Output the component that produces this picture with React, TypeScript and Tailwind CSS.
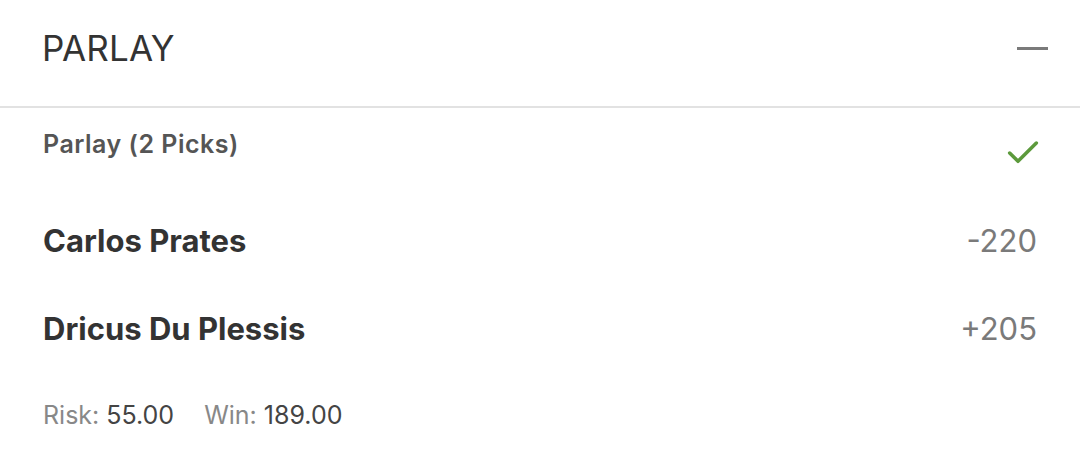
import { Check } from 'lucide-react';

const font = { fontFamily: 'Inter, "Liberation Sans", sans-serif' };

const picks = [
  { name: 'Carlos Prates', odds: '-220' },
  { name: 'Dricus Du Plessis', odds: '+205' },
];

export default function App() {
  return (
    <div className="w-[1080px] h-[462px] bg-white overflow-hidden" style={font}>
      {/* Header */}
      <div className="h-[108px] flex items-start justify-between pt-[31px] pl-[42px] pr-[32px] border-b-2 border-[#e2e2e2]">
        <h1 className="text-[35px] leading-none text-[#333] tracking-[0.2px]">PARLAY</h1>
        <div className="w-[31px] h-[3px] bg-[#7a7a7a] mt-[16px]" />
      </div>

      {/* Body */}
      <div className="pl-[43px] pr-[43px]">
        <div className="flex items-start justify-between pt-[24px]">
          <span className="text-[25px] font-semibold text-[#555] leading-none tracking-[0.5px]">Parlay (2 Picks)</span>
          <Check className="w-[40px] h-[40px] text-[#5c9a3c] mt-[1px] -mr-[6px]" strokeWidth={2.1} />
        </div>

        <div className="flex flex-col gap-[57px] mt-[52px]">
          {picks.map(p => (
            <div key={p.name} className="flex items-center justify-between h-[31px]">
              <span className="text-[31px] font-bold text-[#333] leading-none">{p.name}</span>
              <span className="text-[31px] text-[#7a7a7a] leading-none">{p.odds}</span>
            </div>
          ))}
        </div>

        <div className="mt-[59px] text-[25px] leading-none flex gap-[30px]">
          <span><span className="text-[#888]">Risk:</span> <span className="text-[#444]">55.00</span></span>
          <span><span className="text-[#888]">Win:</span> <span className="text-[#444]">189.00</span></span>
        </div>
      </div>
    </div>
  );
}
